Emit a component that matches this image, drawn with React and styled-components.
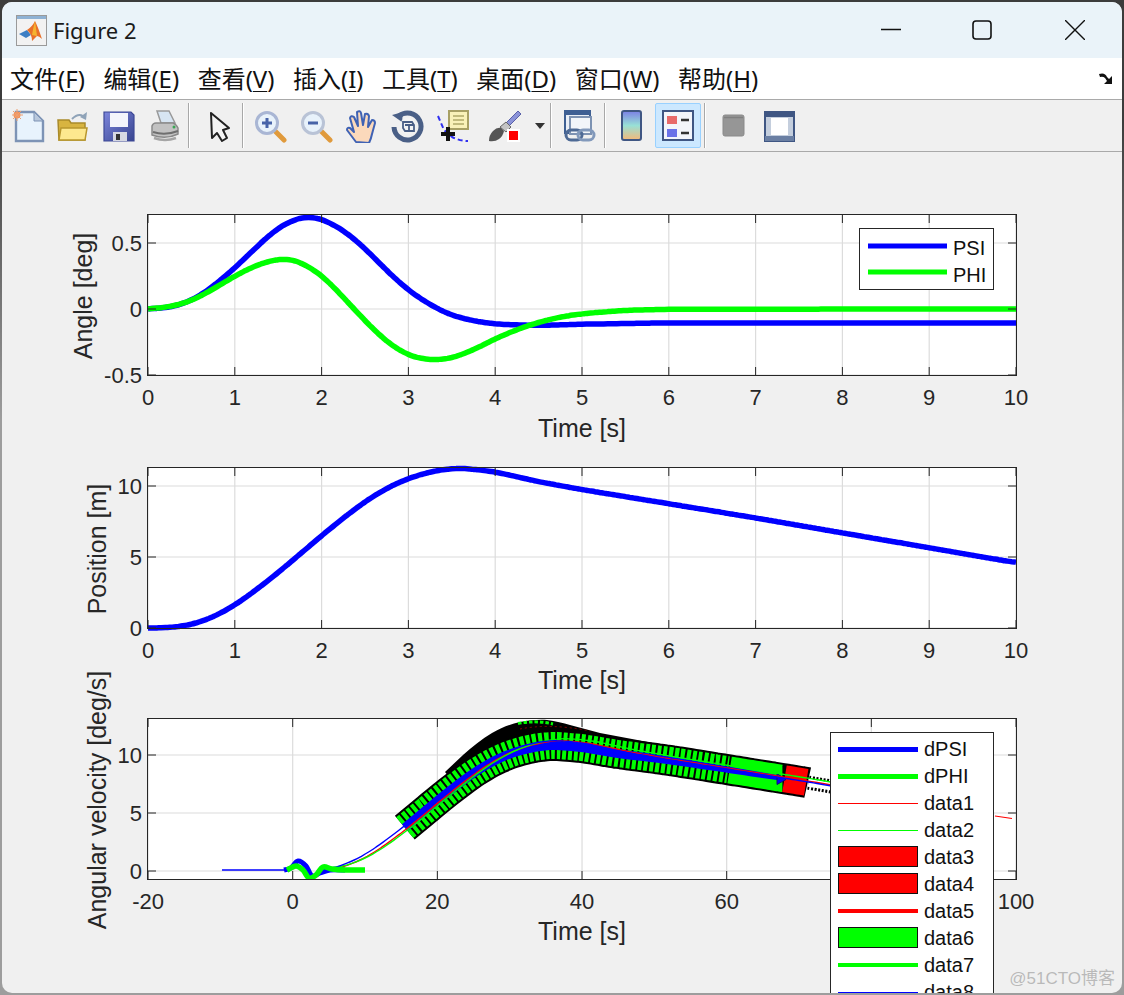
import React from "react";
import styled, { createGlobalStyle } from "styled-components";

const Global = createGlobalStyle`
  html, body { margin: 0; padding: 0; background: #3c3c3c; }
  body { width: 1124px; height: 995px; overflow: hidden; }
`;

const Screen = styled.div`
  position: relative;
  width: 1124px;
  height: 995px;
  box-sizing: border-box;
  padding: 2px;
  overflow: hidden;
  background: linear-gradient(#3c3c3c 0 120px, #9d9d9d 420px);
`;

const Win = styled.div`
  height: 991px;
  display: flex;
  flex-direction: column;
  background: #f0f0f0;
  border-radius: 10px;
  overflow: hidden;
`;

const TitleBar = styled.div`
  height: 56px;
  flex: none;
  display: flex;
  align-items: center;
  padding-left: 14px;
  background: #eaf3f9;
  font-family: "Noto Sans", sans-serif;
  font-size: 22px;
  color: #1a1a1a;
`;

const TitleText = styled.span`
  margin-left: 6px;
  flex: 1;
`;

const WinBtn = styled.div`
  width: 20px;
  height: 20px;
  flex: none;
  margin-left: ${(p) => p.$gap}px;
  display: flex;
`;

const MenuBar = styled.div`
  height: 42px;
  flex: none;
  box-sizing: border-box;
  display: flex;
  align-items: center;
  padding: 0 8px 2px;
  gap: 18.5px;
  background: #fff;
  border-bottom: 1px solid #a9a9a9;
  font-family: "Noto Sans", "Noto Sans CJK SC", sans-serif;
  font-size: 24px;
  color: #111;
`;

const MenuItem = styled.span`
  white-space: nowrap;
  u { text-underline-offset: 3px; text-decoration-thickness: 1px; }
`;

const Overflow = styled.div`
  margin-left: auto;
  display: flex;
`;

const ToolBar = styled.div`
  height: 52px;
  flex: none;
  display: flex;
  align-items: center;
  padding-left: 4px;
  background: #f0f0f0;
  border-bottom: 1px solid #a9a9a9;
  box-sizing: border-box;
`;

const ToolBtn = styled.div`
  width: ${(p) => p.$w || 46}px;
  height: 45px;
  flex: none;
  box-sizing: border-box;
  display: flex;
  align-items: center;
  justify-content: center;
  border-radius: 2px;
  border: 1px solid ${(p) => (p.$active ? "#99d1ff" : "transparent")};
  background: ${(p) => (p.$active ? "#cce8ff" : "transparent")};
`;

const SplitBtn = styled(ToolBtn)`
  justify-content: flex-start;
  padding-left: 10px;
  gap: 13px;
`;

const ToolSep = styled.div`
  width: 2px;
  height: 45px;
  flex: none;
  background: linear-gradient(90deg, #a8a8a8 50%, #fff 50%);
  margin: 0 ${(p) => p.$right || 3}px 0 ${(p) => p.$left || 0}px;
`;

const Figure = styled.div`
  flex: 1;
  min-height: 0;
  display: flex;
  flex-direction: column;
  padding-top: 55px;
`;

const PlotSvg = styled.svg`
  display: block;
  flex: none;
  overflow: visible;
`;

const Tick = styled.text`
  font-family: "Liberation Sans", Arial, sans-serif;
  font-size: 22px;
  fill: #262626;
`;

const AxisLabel = styled.text`
  font-family: "Liberation Sans", Arial, sans-serif;
  font-size: 25px;
  fill: #262626;
`;

const LegendText = styled.text`
  font-family: "Liberation Sans", Arial, sans-serif;
  font-size: 20px;
  fill: #111;
`;

const Watermark = styled.div`
  position: absolute;
  right: 9px;
  bottom: 6px;
  font-family: "Liberation Sans", "Noto Sans CJK SC", sans-serif;
  font-size: 17px;
  color: rgba(130, 130, 130, 0.5);
`;

// smooth line through data points (catmull-rom)
const smooth = (pts) => {
  let d = `M${pts[0][0].toFixed(1)} ${pts[0][1].toFixed(1)}`;
  for (let i = 0; i < pts.length - 1; i++) {
    const p0 = pts[i - 1] || pts[i];
    const p1 = pts[i];
    const p2 = pts[i + 1];
    const p3 = pts[i + 2] || p2;
    const c1 = [p1[0] + (p2[0] - p0[0]) / 6, p1[1] + (p2[1] - p0[1]) / 6];
    const c2 = [p2[0] - (p3[0] - p1[0]) / 6, p2[1] - (p3[1] - p1[1]) / 6];
    d += `C${c1[0].toFixed(1)} ${c1[1].toFixed(1)} ${c2[0].toFixed(1)} ${c2[1].toFixed(1)} ${p2[0].toFixed(1)} ${p2[1].toFixed(1)}`;
  }
  return d;
};

const lerp = (data, t) => {
  if (t <= data[0][0]) return data[0][1];
  for (let i = 0; i < data.length - 1; i++) {
    if (t <= data[i + 1][0]) {
      const k = (t - data[i][0]) / (data[i + 1][0] - data[i][0]);
      return data[i][1] + k * (data[i + 1][1] - data[i][1]);
    }
  }
  return data[data.length - 1][1];
};

// the hand read tables are a bit lumpy, so blur them before drawing
const soften = (data, sigma = 0.1) => {
  const out = [];
  for (let t = 0; t <= 10.001; t += 0.05) {
    let sum = 0;
    let weight = 0;
    for (let k = -3; k <= 3; k += 0.5) {
      const w = Math.exp((-k * k) / 2);
      sum += w * lerp(data, t + k * sigma);
      weight += w;
    }
    out.push([t, t < 0.02 ? data[0][1] : sum / weight]);
  }
  return out;
};

const psi = soften([[0,0],[0.25,0.01],[0.5,0.06],[0.75,0.17],[1,0.31],[1.25,0.47],[1.5,0.62],[1.75,0.695],[1.85,0.705],[2,0.685],[2.25,0.6],[2.5,0.46],[2.75,0.29],[3,0.14],[3.25,0.03],[3.5,-0.05],[3.75,-0.09],[4,-0.115],[4.5,-0.125],[5,-0.115],[6,-0.105],[8,-0.105],[10,-0.105]]);
const phi = soften([[0,0],[0.25,0.015],[0.5,0.06],[0.75,0.15],[1,0.25],[1.25,0.335],[1.5,0.38],[1.6,0.385],[1.75,0.36],[2,0.26],[2.25,0.09],[2.5,-0.09],[2.75,-0.25],[3,-0.355],[3.25,-0.39],[3.5,-0.375],[3.75,-0.31],[4,-0.225],[4.25,-0.155],[4.5,-0.1],[4.75,-0.06],[5,-0.035],[5.5,-0.01],[6,-0.002],[10,0]]);
const pos = soften([[0,0],[0.25,0.02],[0.5,0.22],[0.75,0.75],[1,1.6],[1.25,2.7],[1.5,3.9],[1.75,5.2],[2,6.5],[2.25,7.75],[2.5,8.9],[2.75,9.85],[3,10.55],[3.25,11],[3.5,11.25],[3.6,11.28],[4,11],[4.5,10.3],[5,9.75],[6,8.75],[7,7.75],[8,6.7],[9,5.65],[10,4.6]]);
const posY = (t) => lerp(pos, t);

const T = (t) => 148 + t * 86.8;
const angleY = (v) => 309 - v * 132;
const posPlotY = (v) => 628 - v * 14.2;
const X3 = (v) => 292.7 + v * 7.233;
const Y3 = (v) => 871 - v * 11.6;

const Axes = ({ height, top, boxH, ticksX, mapX, ticksY, xLabelY, yLabel, yLabelX, children, overlay }) => {
  const L = 148;
  const R = 1016;
  const B = top + boxH;
  return (
    <PlotSvg width="1120" height={height} viewBox={`2 ${top - 8} 1120 ${height}`}>
      <rect x={L} y={top} width={R - L} height={boxH} fill="#fff" />
      {ticksX.map((t) => (
        <line key={t} x1={mapX(t)} x2={mapX(t)} y1={top} y2={B} stroke="#dcdcdc" strokeWidth="1.2" />
      ))}
      {ticksY.map(([v, y]) => (
        <line key={v} x1={L} x2={R} y1={y} y2={y} stroke="#dcdcdc" strokeWidth="1.2" />
      ))}
      {children}
      <rect x={L - 0.5} y={top - 0.5} width={R - L + 1} height={boxH + 1} fill="none" stroke="#262626" strokeWidth="1" />
      {ticksX.map((t) => (
        <g key={t}>
          <line x1={mapX(t)} x2={mapX(t)} y1={B} y2={B - 8} stroke="#262626" />
          <line x1={mapX(t)} x2={mapX(t)} y1={top} y2={top + 8} stroke="#262626" />
          <Tick x={mapX(t)} y={B + 30} textAnchor="middle">{t}</Tick>
        </g>
      ))}
      {ticksY.map(([v, y]) => (
        <g key={v}>
          <line x1={L} x2={L + 8} y1={y} y2={y} stroke="#262626" />
          <line x1={R} x2={R - 8} y1={y} y2={y} stroke="#262626" />
          <Tick x={L - 6} y={y + 8} textAnchor="end">{v}</Tick>
        </g>
      ))}
      <AxisLabel x="582" y={xLabelY} textAnchor="middle">Time [s]</AxisLabel>
      <AxisLabel x={yLabelX} y={top + boxH / 2 + 1} textAnchor="middle" transform={`rotate(-90 ${yLabelX} ${top + boxH / 2 + 1})`}>{yLabel}</AxisLabel>
      {overlay}
    </PlotSvg>
  );
};

const CurveAngle = ({ data, color }) => (
  <path d={smooth(data.map(([t, v]) => [T(t), angleY(v)]))} fill="none" stroke={color} strokeWidth="5.5" />
);

// arrow shafts sit a few px under the thin lines near the hump, then meet them further right
const bandDy = (t) => {
  const k = Math.min(1, Math.max(0, (t - 3.4) / 2));
  return 5 * (1 - k * k * (3 - 2 * k));
};

const bandPoint = (t) => [X3(t * 10), Y3(posY(t)) + bandDy(t)];

const bandPoints = (a, b) => {
  const out = [];
  for (let t = a; t < b - 0.02; t += 0.1) out.push(bandPoint(t));
  out.push(bandPoint(b));
  return out;
};

const band = (a, b) => smooth(bandPoints(a, b));

// blue shaft gets thinner towards its arrow head
const taperedShaft = (a, b) => {
  const pts = bandPoints(a, b);
  const upper = [];
  const lower = [];
  pts.forEach((p, i) => {
    const prev = pts[i - 1] || p;
    const next = pts[i + 1] || p;
    const dx = next[0] - prev[0];
    const dy = next[1] - prev[1];
    const len = Math.hypot(dx, dy) || 1;
    const t = a + ((b - a) * i) / (pts.length - 1);
    const half = t < 4.5 ? 4.5 : 4.5 - (2 * (t - 4.5)) / (b - 4.5);
    upper.push([p[0] + (dy / len) * half, p[1] - (dx / len) * half]);
    lower.push([p[0] - (dy / len) * half, p[1] + (dx / len) * half]);
  });
  const line = (list) => list.map((p) => `${p[0].toFixed(1)} ${p[1].toFixed(1)}`).join("L");
  return `M${line(upper)}L${line(lower.reverse())}Z`;
};

const thin = (shift, color, dy, end) => {
  const out = [];
  for (let t = 0.3; t <= end + 0.001; t += 0.1) out.push([X3(t * 10 + shift), Y3(posY(t)) + dy]);
  return <path d={smooth(out)} fill="none" stroke={color} strokeWidth="1.4" />;
};

const LegendRow = ({ y, label, color, w, patch }) => (
  <g>
    {patch ? (
      <rect x="838.5" y={y - 10.5} width="79" height="20" fill={color} stroke="#111" strokeWidth="1" />
    ) : (
      <line x1="838" x2="918" y1={w % 2 ? y + 0.5 : y} y2={w % 2 ? y + 0.5 : y} stroke={color} strokeWidth={w} />
    )}
    <LegendText x="924" y={y + 7}>{label}</LegendText>
  </g>
);

const Plot3Data = () => (
  <g>
    <clipPath id="c3"><rect x="148" y="719" width="868" height="160" /></clipPath>
    <g clipPath="url(#c3)">
      {/* black pile of arrow heads above the shaft */}
      <path d="M445 772L463 755C472 747 482 739 492 733C502 727 511 724 520 722C530 720 540 719.5 547 720C556 721 563 723 570 725L600 733L680 748L680 760L600 750L547 745L500 755L460 790Z" fill="#000" />
      <path d="M518 723.5Q536 720 553 724" fill="none" stroke="#00ff00" strokeWidth="3" strokeDasharray="3.5 2" />
      <path d="M520 729Q550 723 590 731" fill="none" stroke="#8a0000" strokeWidth="1" strokeDasharray="2 3" />
      {/* arrow shafts */}
      <path d={band(1.55, 7.12)} fill="none" stroke="#000" strokeWidth="31" />
      <path d={band(1.55, 6.02)} fill="none" stroke="#00ff00" strokeWidth="27" strokeDasharray="4 1.9" />
      <path d={band(6.04, 6.77)} fill="none" stroke="#00ff00" strokeWidth="27" />
      <path d={band(6.8, 7.1)} fill="none" stroke="#ff0000" strokeWidth="27" />
      <path d={band(7.13, 8)} fill="none" stroke="#000" strokeWidth="14" strokeDasharray="2 1.6" />
      <path d={band(7.13, 8)} fill="none" stroke="#fff" strokeWidth="8" />
      <path d={taperedShaft(1.55, 6.72)} fill="#0000ff" />
      <path d="M777 773.5L786 779.5L777 784.5Z" fill="#0000ff" stroke="#10106a" />
      {thin(1.3, "#ff0000", 0, 8)}
      {thin(2, "#00ff00", -2, 8)}
      {thin(0.5, "#0000ff", 0, 8)}
      <path d="M995 816L1012 818.5" stroke="#ff0000" strokeWidth="1.2" />
      {/* flat start and the small wiggle near the origin */}
      <path d="M222 870L285 870" stroke="#0000ff" strokeWidth="1.5" />
      <path d={smooth([[284,870],[291,868],[298,861],[306,866],[312,876],[320,873],[330,870],[345,870]])} fill="none" stroke="#0000ff" strokeWidth="5" />
      <path d={smooth([[287,870],[296,866],[303,870],[309,878],[316,875],[323,867],[332,869],[345,870],[365,870]])} fill="none" stroke="#00ff00" strokeWidth="5.5" />
    </g>
  </g>
);

// legend hangs past the axes and is cut by the window, so it goes over the tick labels
const Plot3Legend = () => (
  <g>
    <rect x="830.5" y="732.5" width="163" height="270" fill="#fff" stroke="#262626" />
    <LegendRow y={749} label="dPSI" color="#0000ff" w="5" />
    <LegendRow y={776} label="dPHI" color="#00ff00" w="5" />
    <LegendRow y={803} label="data1" color="#ff0000" w="1" />
    <LegendRow y={830} label="data2" color="#00ff00" w="1" />
    <LegendRow y={857} label="data3" color="#ff0000" patch />
    <LegendRow y={884} label="data4" color="#ff0000" patch />
    <LegendRow y={911} label="data5" color="#ff0000" w="4" />
    <LegendRow y={938} label="data6" color="#00ff00" patch />
    <LegendRow y={965} label="data7" color="#00ff00" w="4" />
    <LegendRow y={992} label="data8" color="#0000ff" w="1" />
  </g>
);

const Icon = ({ w = 34, h = 34, children }) => (
  <svg width={w} height={h} viewBox={`0 0 ${w} ${h}`}>{children}</svg>
);

const icons = {
  newDoc: (
    <Icon>
      <path d="M4 3h18l9 9v20H4z" fill="#e8f3fd" stroke="#7d93b5" strokeWidth="2.4" />
      <path d="M22 3v9h9z" fill="#b9c8dc" stroke="#7d93b5" />
      <circle cx="5" cy="6" r="3.5" fill="#f09058" />
      <path d="M5 0v12M-1 6h12M1 2l8 8M9 2L1 10" stroke="#f0a070" />
    </Icon>
  ),
  open: (
    <Icon>
      <path d="M1 11h11l2 3h14v17H2z" fill="#d8b440" stroke="#a98a2a" strokeWidth="1.5" />
      <path d="M2 31l2-12h26l-2 12z" fill="#fde88f" stroke="#b8962e" strokeWidth="1.5" />
      <path d="M15 10q6-6 11-3" fill="none" stroke="#8fa3b8" strokeWidth="2" />
      <path d="M30 3l-1 8-6-3z" fill="#8fa3b8" />
    </Icon>
  ),
  save: (
    <Icon>
      <defs>
        <linearGradient id="fl" x1="0" y1="0" x2="1" y2="1">
          <stop offset="0" stopColor="#7d86dc" />
          <stop offset="1" stopColor="#37448f" />
        </linearGradient>
      </defs>
      <path d="M2 3h27l3 3v26H2z" fill="url(#fl)" stroke="#3d4896" strokeWidth="1.2" />
      <rect x="8" y="4" width="18" height="14" fill="#f4f5fb" />
      <rect x="11" y="23" width="14" height="9" fill="#d6d8e2" />
      <rect x="14" y="25" width="4" height="6" fill="#333" />
    </Icon>
  ),
  print: (
    <Icon>
      <path d="M9 2h12l6 12H13z" fill="#d7e5f2" stroke="#9a9a9a" strokeWidth="1.5" />
      <path d="M4 17q1-3 4-3h17q3 1 5 5v6q-12 6-26 1z" fill="#c2c2c2" stroke="#8a8a8a" strokeWidth="1.5" />
      <path d="M5 23q12 4 25-1" fill="none" stroke="#6f6f6f" strokeWidth="2" />
      <path d="M6 29q11 4 22 0" stroke="#a5a5a5" fill="none" strokeWidth="2.5" />
      <circle cx="26" cy="18" r="1.5" fill="#3aa655" />
    </Icon>
  ),
  arrow: (
    <Icon>
      <path d="M8 4L9 29L14 24L19 32L24 29L20 21L26 19Z" fill="#f4f4f4" stroke="#222" strokeWidth="2" strokeLinejoin="round" />
    </Icon>
  ),
  zoomIn: (
    <Icon>
      <path d="M22 22l9 9" stroke="#e09a3c" strokeWidth="5" strokeLinecap="round" />
      <circle cx="14" cy="14" r="10.5" fill="#e8f2fb" stroke="#a9b6d4" strokeWidth="3" />
      <path d="M9 14h10M14 9v10" stroke="#4763a8" strokeWidth="3" />
    </Icon>
  ),
  zoomOut: (
    <Icon>
      <path d="M22 22l9 9" stroke="#e09a3c" strokeWidth="5" strokeLinecap="round" />
      <circle cx="14" cy="14" r="10.5" fill="#e8f2fb" stroke="#b9c3d6" strokeWidth="3" />
      <path d="M9 14h10" stroke="#4763a8" strokeWidth="3" />
    </Icon>
  ),
  hand: (
    <Icon>
      <path d="M11 33L2 21q0-3 3-2l4 4-4-14q1-3 4-1l4 9-1-14q3-2 4 1l2 12 2-11q3-1 4 2l-1 11 4-7q3 0 3 3l-3 11q-1 5-3 9z" fill="#fbd9bb" stroke="#3f62b4" strokeWidth="2" strokeLinejoin="round" />
    </Icon>
  ),
  rotate: (
    <Icon>
      <path d="M8 7a13.5 13.5 0 1 1-5 11" fill="none" stroke="#4a5f86" strokeWidth="5" />
      <path d="M1 6l11-3-1 10z" fill="#4a5f86" />
      <circle cx="17" cy="17" r="8" fill="#f3f3f3" />
      <path d="M12 13h9l2 3v6h-9l-2-3zM14 16h9M18 16v6" fill="none" stroke="#4a5f86" strokeWidth="1.8" />
    </Icon>
  ),
  cursor: (
    <Icon>
      <rect x="12" y="2" width="19" height="18" fill="#f9f1b8" stroke="#a8a064" strokeWidth="2" />
      <path d="M16 7h11M16 11h11M16 15h11" stroke="#c2bb7c" strokeWidth="2" />
      <path d="M1 7l6 14 8 7q8 4 16 4" fill="none" stroke="#3030f0" strokeWidth="2" strokeDasharray="5 3" />
      <path d="M4 25h14M11 18v14" stroke="#111" strokeWidth="4" />
    </Icon>
  ),
  brush: (
    <Icon>
      <path d="M18 14L30 2l3 3-13 13z" fill="#8b93d8" stroke="#5960a8" />
      <path d="M18 13l5 5-5 5-6-5z" fill="#c4c4c4" stroke="#666" />
      <path d="M1 32q0-6 4-10t8-3l3 3q-1 5-5 8t-10 2z" fill="#555" />
      <rect x="19" y="20" width="13" height="13" fill="#fff" />
      <rect x="21" y="22" width="9" height="9" fill="#ff0000" />
    </Icon>
  ),
  drop: (
    <Icon w={10} h={6}>
      <path d="M0 0h10L5 6z" fill="#333" />
    </Icon>
  ),
  link: (
    <Icon>
      <rect x="2" y="2" width="25" height="22" fill="#e9eef6" stroke="#3e5f93" strokeWidth="2" />
      <path d="M2 4h25" stroke="#3e5f93" strokeWidth="4" />
      <rect x="7" y="8" width="21" height="17" fill="#f2f5f9" stroke="#7d92b2" strokeWidth="2" />
      <rect x="3" y="21" width="16" height="10" rx="5" fill="none" stroke="#4e6a95" strokeWidth="3" />
      <rect x="15" y="21" width="16" height="10" rx="5" fill="none" stroke="#8299bb" strokeWidth="3" />
    </Icon>
  ),
  colorbar: (
    <Icon>
      <defs>
        <linearGradient id="cb" x1="0" y1="0" x2="0" y2="1">
          <stop offset="0" stopColor="#7b7fe6" />
          <stop offset="0.5" stopColor="#98e0d6" />
          <stop offset="1" stopColor="#f5b878" />
        </linearGradient>
      </defs>
      <rect x="7" y="2" width="19" height="29" rx="2" fill="url(#cb)" stroke="#3f5683" strokeWidth="2" />
    </Icon>
  ),
  legend: (
    <Icon>
      <rect x="2" y="2" width="30" height="29" fill="#f3f5fa" stroke="#3f5683" strokeWidth="2" />
      <rect x="6" y="7" width="10" height="8" fill="#e86a6a" />
      <rect x="6" y="20" width="10" height="8" fill="#6a72e8" />
      <path d="M20 11h8M20 24h8" stroke="#333" strokeWidth="2.5" />
    </Icon>
  ),
  gray: (
    <Icon>
      <rect x="6" y="6" width="21" height="21" rx="2" fill="#969696" stroke="#8a8a8a" />
      <path d="M7 8.5h19" stroke="#7f7f7f" strokeWidth="1.5" />
    </Icon>
  ),
  frame: (
    <Icon>
      <rect x="2" y="3" width="29" height="29" fill="#c4cedd" stroke="#3f5683" strokeWidth="2" />
      <rect x="2" y="3" width="29" height="5" fill="#3f5683" />
      <rect x="8" y="9" width="17" height="17" fill="#fff" />
      <rect x="2" y="27" width="29" height="5" fill="#6a7fa3" />
    </Icon>
  ),
};

const Logo = () => (
  <svg width="31" height="31" viewBox="0 0 31 31">
    <rect x="0.5" y="0.5" width="30" height="30" fill="#f2f2f2" stroke="#9a9a9a" />
    <rect x="1" y="1" width="29" height="3" fill="#8fb2d4" />
    <path d="M3 19l8-4 4 5-5 3z" fill="#3d7fc4" />
    <path d="M11 15q5-3 8-9 3 6 7 18-3-3-5-3l-5 5q0-7-5-11z" fill="#e8702a" />
    <path d="M19 6q-2 8-3 14l5 1z" fill="#f5b32f" />
  </svg>
);

const menu = [
  ["文件", "F"], ["编辑", "E"], ["查看", "V"], ["插入", "I"],
  ["工具", "T"], ["桌面", "D"], ["窗口", "W"], ["帮助", "H"],
];

export default function App() {
  return (
    <Screen>
      <Global />
      <Win>
        <TitleBar>
          <Logo />
          <TitleText>Figure 2</TitleText>
          <WinBtn $gap={0}>
            <svg width="20" height="20"><path d="M0 9.5h20" stroke="#111" strokeWidth="1.4" /></svg>
          </WinBtn>
          <WinBtn $gap={71}>
            <svg width="20" height="20"><rect x="1" y="1" width="18" height="18" rx="3" fill="none" stroke="#111" strokeWidth="1.6" /></svg>
          </WinBtn>
          <WinBtn $gap={73}>
            <svg width="20" height="20"><path d="M0 0l20 20M20 0L0 20" stroke="#111" strokeWidth="1.4" /></svg>
          </WinBtn>
          <WinBtn $gap={17} />
        </TitleBar>
        <MenuBar>
          {menu.map(([zh, key]) => (
            <MenuItem key={key}>{zh}(<u>{key}</u>)</MenuItem>
          ))}
          <Overflow>
            <svg width="16" height="14" viewBox="0 0 16 14">
              <path d="M1 3q6-2 8 3l2 2 3-3v8H6l3-3-2-3q-2-2-5-1z" fill="#111" />
            </svg>
          </Overflow>
        </MenuBar>
        <ToolBar>
          <ToolBtn>{icons.newDoc}</ToolBtn>
          <ToolBtn $w={44}>{icons.open}</ToolBtn>
          <ToolBtn>{icons.save}</ToolBtn>
          <ToolBtn>{icons.print}</ToolBtn>
          <ToolSep $right={8} />
          <ToolBtn $w={44}>{icons.arrow}</ToolBtn>
          <ToolSep />
          <ToolBtn>{icons.zoomIn}</ToolBtn>
          <ToolBtn>{icons.zoomOut}</ToolBtn>
          <ToolBtn>{icons.hand}</ToolBtn>
          <ToolBtn>{icons.rotate}</ToolBtn>
          <ToolBtn>{icons.cursor}</ToolBtn>
          <SplitBtn $w={72}>{icons.brush}{icons.drop}</SplitBtn>
          <ToolSep $left={1} $right={5} />
          <ToolBtn>{icons.link}</ToolBtn>
          <ToolSep $left={1} $right={3} />
          <ToolBtn>{icons.colorbar}</ToolBtn>
          <ToolBtn $active>{icons.legend}</ToolBtn>
          <ToolSep $left={3} $right={5} />
          <ToolBtn>{icons.gray}</ToolBtn>
          <ToolBtn>{icons.frame}</ToolBtn>
        </ToolBar>
        <Figure>
          <Axes
            height={253}
            top={215}
            boxH={160}
            ticksX={[0,1,2,3,4,5,6,7,8,9,10]}
            mapX={T}
            ticksY={[["-0.5", 375], ["0", 309], ["0.5", 243]]}
            xLabelY={437}
            yLabel="Angle [deg]"
            yLabelX={92}
            overlay={
              <g>
                <rect x="859.5" y="228.5" width="134" height="61" fill="#fff" stroke="#262626" />
                <line x1="868" x2="947" y1="246" y2="246" stroke="#0000ff" strokeWidth="5" />
                <line x1="868" x2="947" y1="272" y2="272" stroke="#00ff00" strokeWidth="5" />
                <LegendText x="953" y="255">PSI</LegendText>
                <LegendText x="953" y="282">PHI</LegendText>
              </g>
            }
          >
            <CurveAngle data={psi} color="#0000ff" />
            <CurveAngle data={phi} color="#00ff00" />
          </Axes>
          <Axes
            height={251}
            top={468}
            boxH={160}
            ticksX={[0,1,2,3,4,5,6,7,8,9,10]}
            mapX={T}
            ticksY={[["0", 628], ["5", 557], ["10", 486]]}
            xLabelY={689}
            yLabel="Position [m]"
            yLabelX={106}
          >
            <path d={smooth(pos.map(([t, v]) => [T(t), posPlotY(v)]))} fill="none" stroke="#0000ff" strokeWidth="5.5" />
          </Axes>
          <Axes
            height={270}
            top={719}
            boxH={160}
            ticksX={[-20,0,20,40,60,80,100]}
            mapX={X3}
            ticksY={[["0", 871], ["5", 813], ["10", 755]]}
            xLabelY={940}
            yLabel="Angular velocity [deg/s]"
            yLabelX={106}
            overlay={<Plot3Legend />}
          >
            <Plot3Data />
          </Axes>
        </Figure>
      </Win>
      <Watermark>@51CTO博客</Watermark>
    </Screen>
  );
}
